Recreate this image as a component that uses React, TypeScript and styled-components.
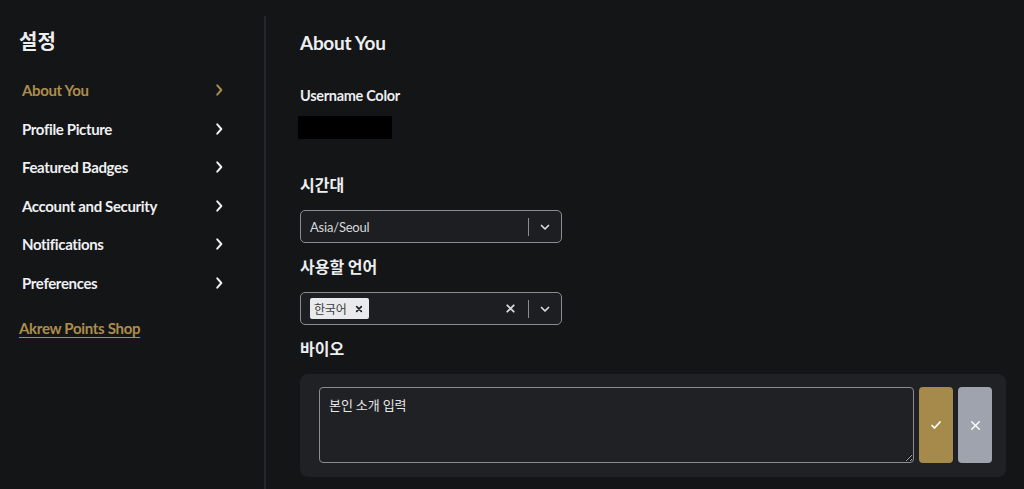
import React from 'react'
import styled, { createGlobalStyle } from 'styled-components'

const GlobalStyle = createGlobalStyle`
  html, body {
    margin: 0;
    padding: 0;
    background: #141517;
  }
  body {
    font-family: Lato, "Noto Sans CJK KR", sans-serif;
    color: #e9eaec;
  }
  * { box-sizing: border-box; }
`

const Page = styled.div`
  display: flex;
  width: 1024px;
  height: 489px;
  overflow: hidden;
  background: #141517;
`

const Sidebar = styled.aside`
  width: 264px;
  flex-shrink: 0;
  padding: 27px 0 0 19px;
  display: flex;
  flex-direction: column;
`

const Divider = styled.div`
  width: 2px;
  margin-top: 16px;
  background: #242629;
  flex-shrink: 0;
`

const SideTitle = styled.h1`
  margin: 0 0 16px;
  font-family: "Noto Sans CJK KR", sans-serif;
  font-size: 20px;
  font-weight: 700;
  color: #eceef0;
  line-height: 28px;
`

const Menu = styled.nav`
  display: flex;
  flex-direction: column;
`

const MenuItem = styled.a<{ $active?: boolean }>`
  display: flex;
  align-items: center;
  justify-content: space-between;
  width: 207px;
  height: 38.5px;
  padding-left: 3px;
  font-size: 15px;
  font-weight: 700;
  letter-spacing: -0.35px;
  color: ${p => (p.$active ? '#ad8d4c' : '#eef0f2')};
  cursor: pointer;
  svg { color: ${p => (p.$active ? '#ad8d4c' : '#eef0f2')}; }
`

const ShopLink = styled.a`
  margin-top: 17px;
  font-size: 15px;
  font-weight: 700;
  letter-spacing: -0.3px;
  color: #ad8d4c;
  text-decoration: underline;
  text-underline-offset: 3px;
`

const Main = styled.main`
  flex: 1;
  padding: 30px 18px 0 34px;
  display: flex;
  flex-direction: column;
`

const PageTitle = styled.h2`
  margin: 0 0 29px;
  font-size: 19px;
  font-weight: 700;
  letter-spacing: -0.3px;
  line-height: 26px;
  color: #eceef0;
`

const FieldLabel = styled.h3<{ $korean?: boolean }>`
  margin: 0;
  font-family: ${p => (p.$korean ? '"Noto Sans CJK KR", sans-serif' : 'Lato, sans-serif')};
  font-size: ${p => (p.$korean ? '16px' : '14.5px')};
  font-weight: 700;
  letter-spacing: ${p => (p.$korean ? '0' : '-0.3px')};
  line-height: 22px;
  color: #eceef0;
`

const ColorSwatch = styled.div`
  width: 94px;
  height: 23px;
  margin: 9px 0 34px -2px;
  background: #000;
`

const SelectBox = styled.div`
  width: 262px;
  height: 33px;
  margin: 15px 0 12px;
  border: 1px solid #8b8c8f;
  border-radius: 5px;
  background: #1d1e21;
  display: flex;
  align-items: center;
  padding: 0 10px 0 9px;
`

const SelectValue = styled.div`
  flex: 1;
  font-size: 13px;
  color: #d6d8db;
  letter-spacing: -0.2px;
`

const Tag = styled.span`
  display: inline-flex;
  align-items: center;
  gap: 8px;
  height: 21px;
  padding: 0 6px 0 4px;
  background: #e9eaec;
  border-radius: 2px;
  font-family: "Noto Sans CJK KR", sans-serif;
  font-size: 12px;
  color: #3c3d40;
  svg { color: #1d1e21; }
`

const Separator = styled.span`
  width: 1px;
  height: 18px;
  background: #8b8c8f;
  margin: 0 10px 0 12px;
`

const IconWrap = styled.span`
  display: flex;
  align-items: center;
  color: #d6d8db;
`

const BioPanel = styled.div`
  margin-top: 15px;
  width: 706px;
  height: 103px;
  background: #202124;
  border-radius: 8px;
  padding: 13px 14px 14px 19px;
  display: flex;
  gap: 5px;
`

const BioInput = styled.textarea`
  flex: 1;
  height: 76px;
  background: #202124;
  border: 1px solid #8b8c8f;
  border-radius: 4px;
  padding: 7px 9px 8px;
  font-family: "Noto Sans CJK KR", sans-serif;
  font-size: 13px;
  color: #e6e7e9;
  resize: vertical;
  outline: none;
  &::placeholder { color: #e6e7e9; }
`

const ActionButton = styled.button<{ $tone: 'confirm' | 'cancel' }>`
  width: 34px;
  height: 76px;
  border: none;
  border-radius: 4px;
  background: ${p => (p.$tone === 'confirm' ? '#a68a4b' : '#9ea3ae')};
  display: flex;
  align-items: center;
  justify-content: center;
  color: #fff;
  padding: 0;
`

const Chevron = ({ size = 14 }: { size?: number }) => (
  <svg width={size} height={size} viewBox="0 0 24 24" fill="none" stroke="currentColor" strokeWidth="3.4" strokeLinecap="round" strokeLinejoin="round">
    <path d="M9 4l7 8-7 8" />
  </svg>
)

const ChevronDown = () => (
  <svg width="12" height="12" viewBox="0 0 24 24" fill="none" stroke="currentColor" strokeWidth="3.5" strokeLinecap="round" strokeLinejoin="round">
    <path d="M5 9l7 7 7-7" />
  </svg>
)

const Cross = ({ size = 10, width = 3 }: { size?: number; width?: number }) => (
  <svg width={size} height={size} viewBox="0 0 24 24" fill="none" stroke="currentColor" strokeWidth={width} strokeLinecap="round">
    <path d="M5 5l14 14M19 5L5 19" />
  </svg>
)

const Check = () => (
  <svg width="12" height="12" viewBox="0 0 24 24" fill="none" stroke="currentColor" strokeWidth="3.5" strokeLinecap="round" strokeLinejoin="round">
    <path d="M4 13l5 5L20 6" />
  </svg>
)

const menu = ['About You', 'Profile Picture', 'Featured Badges', 'Account and Security', 'Notifications', 'Preferences']

export default function App() {
  return (
    <>
      <GlobalStyle />
      <Page>
        <Sidebar>
          <SideTitle>설정</SideTitle>
          <Menu>
            {menu.map((item, i) => (
              <MenuItem key={item} $active={i === 0}>
                {item}
                <Chevron />
              </MenuItem>
            ))}
          </Menu>
          <ShopLink>Akrew Points Shop</ShopLink>
        </Sidebar>
        <Divider />
        <Main>
          <PageTitle>About You</PageTitle>
          <FieldLabel>Username Color</FieldLabel>
          <ColorSwatch />
          <FieldLabel $korean>시간대</FieldLabel>
          <SelectBox>
            <SelectValue>Asia/Seoul</SelectValue>
            <Separator />
            <IconWrap><ChevronDown /></IconWrap>
          </SelectBox>
          <FieldLabel $korean>사용할 언어</FieldLabel>
          <SelectBox>
            <SelectValue>
              <Tag>한국어<Cross size={8} width={5} /></Tag>
            </SelectValue>
            <IconWrap><Cross size={11} width={4} /></IconWrap>
            <Separator />
            <IconWrap><ChevronDown /></IconWrap>
          </SelectBox>
          <FieldLabel $korean>바이오</FieldLabel>
          <BioPanel>
            <BioInput placeholder="본인 소개 입력" />
            <ActionButton $tone="confirm"><Check /></ActionButton>
            <ActionButton $tone="cancel"><Cross size={13} width={2.5} /></ActionButton>
          </BioPanel>
        </Main>
      </Page>
    </>
  )
}
